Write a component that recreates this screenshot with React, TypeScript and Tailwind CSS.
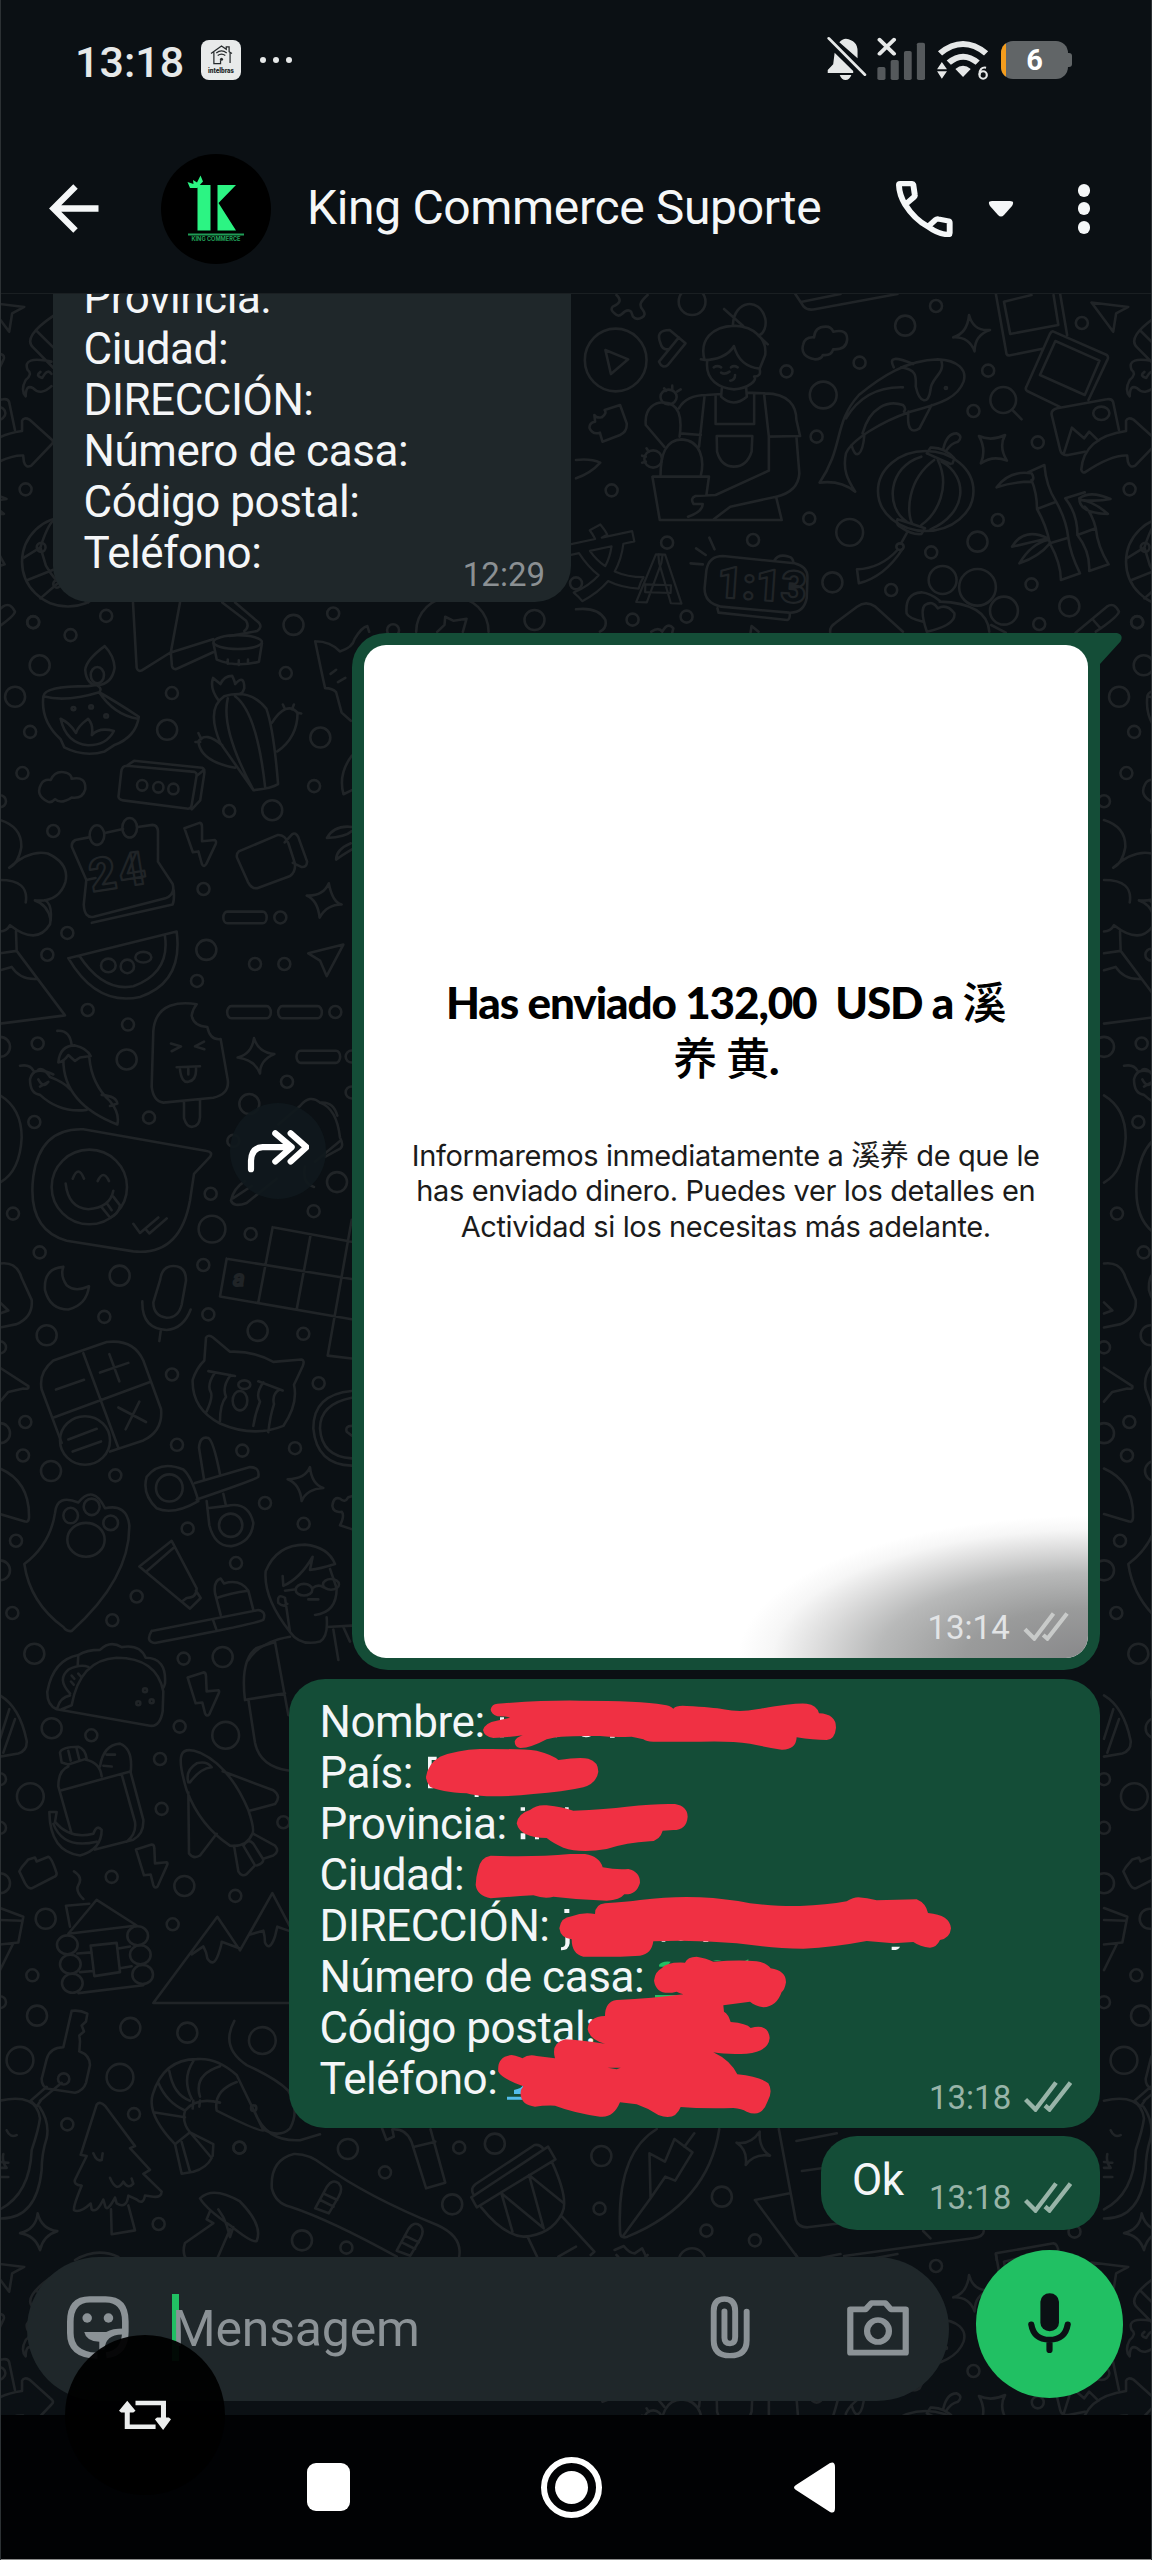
import React from 'react';

type Layer = { t: string; sx: number; sy: number; ox: number; oy: number; d: string; e: number[][]; c: number[][] };

/* Wallpaper doodles. e: ellipses [cx, cy, rx, ry], c: bubbles [cx, cy, size]. */
const layers: Layer[] = [
  {
    t: 'translate(0 280) scale(.36735 .40816)', ox: 0, oy: 280, sx: 0.36735, sy: 0.40816,
    d: 'M-34 55L66 66L33 82L25 127ZM145 88Q60 140 90 165L145 215M100 125L145 165M140 200Q60 185 75 220Q90 230 70 245Q55 270 70 285Q70 255 90 265Q110 285 140 260M110 225Q95 235 115 240Q130 215 140 230M-62 465Q-55 385 60 370L60 345Q65 335 80 342L142 392Q147 398 140 403L85 455Q70 462 65 445L63 430Q20 428 -50 470Q-58 475 -62 465M110 655Q130 600 145 590M65 680L110 655L125 700Q150 740 180 755L240 790M75 735L145 710M110 780L155 745M362 790L372 950Q375 960 385 957L465 912L490 790M465 912L468 945Q470 955 480 953L580 912M467 912L580 880M605 790L670 835Q680 850 665 860M640 790L705 840Q715 850 700 860L625 872M581 890L590 930Q645 950 705 935L713 890M620 930V940M650 932V943M675 930V940M285 897Q235 930 232 955Q235 990 265 993Q305 990 312 950Q310 920 285 897M118 1020Q120 995 240 995L262 992Q280 1000 270 1010Q310 1030 378 1070Q370 1120 310 1140L285 1155Q230 1170 175 1145L165 1125Q110 1080 118 1020Q180 1035 270 1010M270 1010Q310 1065 375 1075M165 1075Q180 1135 240 1140Q290 1140 310 1105Q270 1095 250 1115Q255 1090 240 1075Q210 1095 207 1110Q190 1085 165 1075M690 1250L600 1135Q560 1050 610 1020Q680 1000 725 1050Q745 1100 757 1235Q740 1245 690 1250ZM620 1025Q600 1100 690 1250M640 1020Q700 1060 722 1245M740 1085Q780 1030 810 1060Q810 1120 755 1155M605 1140Q560 1105 540 1130Q545 1180 640 1195M595 1030Q570 1000 580 975L600 990Q610 970 632 970Q640 985 640 990Q665 965 665 1000Q660 1015 650 1015M770 1040L775 1050M800 1040L795 1052M808 1060L820 1062M540 1110L548 1125M532 1132H545M858 885Q875 960 885 1000Q905 1000 915 1010L930 1060L955 1080M858 885Q900 885 925 910Q960 900 965 880Q985 850 1000 848L1005 862M900 965L915 955M920 985L940 975M1133 862A97 85 0 0 1 1330 862M1190 862L1210 845L1212 825L1235 835L1270 830L1260 862M130 1278Q95 1262 112 1235Q120 1222 138 1225Q150 1200 180 1207Q195 1212 195 1222Q235 1215 232 1248Q225 1272 195 1268Q165 1285 150 1272Q140 1282 130 1278ZM345 1190L530 1205Q537 1208 535 1215L522 1285Q520 1297 508 1295L335 1275Q320 1272 323 1262L330 1205Q332 1190 345 1190L365 1178L550 1195Q558 1198 556 1210L545 1275L522 1297M556 1200L535 1215M245 1365L205 1372Q193 1378 196 1390L235 1470L228 1530Q230 1565 255 1560L450 1515Q478 1505 470 1480L430 1425M285 1355L335 1345M375 1340L415 1335Q428 1335 430 1350V1425M235 1470L260 1465M473 1495Q475 1520 470 1530L250 1575M502 1343L543 1330Q550 1330 550 1340V1375L585 1372Q590 1375 587 1382L562 1430Q555 1440 550 1432L540 1400L525 1402ZM650 1400L755 1360Q775 1358 785 1380L803 1430Q805 1450 790 1460L700 1490Q685 1492 675 1475L645 1415Q643 1405 650 1400M775 1378L795 1358Q805 1352 812 1365L836 1425Q835 1440 820 1438L797 1428M958 1165Q920 1210 935 1260L958 1250M890 1367Q910 1335 958 1340M890 1367Q940 1365 958 1350M955 1380Q915 1395 915 1420Q930 1410 958 1395M895 1478Q905 1525 930 1530Q890 1530 870 1562Q865 1520 835 1508Q880 1510 895 1478ZM0 1323Q60 1340 58 1390Q50 1430 25 1440M25 1440Q80 1395 130 1405Q190 1430 178 1475Q160 1525 95 1520Q130 1530 138 1568M0 1470Q80 1470 70 1525',
    e: [[185, 690, 125, 110], [112, 655, 12, 11], [155, 745, 10, 9], [647, 887, 66, 17], [265, 968, 18, 20], [200, 1050, 5, 4], [248, 1046, 5, 4], [289, 1068, 5, 4], [387, 1238, 14, 13], [431, 1243, 14, 13], [472, 1247, 14, 13], [264, 1360, 20, 24], [353, 1342, 20, 24]],
    c: [[90, 838, 0], [192, 870, 0], [289, 823, 0], [907, 817, 0], [778, 963, 0], [468, 1012, 0], [82, 1107, 0], [61, 1208, 0], [855, 1240, 0], [624, 1301, 0], [145, 1350, 0], [554, 1492, 0], [1070, 858, 0], [0, 1277, 0], [108, 944, 1], [799, 845, 1], [41, 1021, 1], [455, 1102, 1], [872, 1121, 1], [741, 1299, 1], [1455, 833, 1]],
  },
  {
    t: 'translate(576 280) scale(.36735 .33333)', ox: 576, oy: 280, sx: 0.36735, sy: 0.33333,
    d: 'M110 45C125 60 120 70 100 80Q92 90 105 100Q115 112 125 102Q140 85 150 95L155 110Q165 122 180 112Q192 105 182 90C170 75 175 65 195 45M80 210L142 238L95 282ZM230 190Q215 150 255 150L298 190L250 255Q235 268 226 245L280 172M230 190Q235 210 250 208M427 135C430 60 500 50 515 115C520 140 510 160 500 165M403 87L455 138M495 165L522 193M340 238L350 240C335 180 370 140 430 137C490 140 520 180 515 225L500 266C465 262 440 240 430 198C415 228 380 240 350 240M357 245C352 300 390 325 430 328C470 325 495 300 485 290M500 268Q505 290 485 290M375 262Q385 255 395 262M422 262Q430 255 440 262M395 278Q405 285 418 275M433 285Q433 300 420 302M397 325L395 350Q428 385 465 350L463 320M280 385Q300 345 355 345L395 342M465 338L515 340C580 340 600 380 600 420L610 468L525 470L512 342M350 347L335 500M380 345L380 432L485 432L485 340M383 468H480L478 515Q465 560 430 560Q395 560 384 515ZM285 460L340 465M600 470L608 580Q605 635 545 650L420 680L375 718M525 470L525 572L380 645L325 648Q310 655 320 672L345 672Q345 695 305 710M545 652L560 720H228L208 590H362L355 645M230 590C230 520 245 480 288 478C340 482 350 540 340 585M240 500L190 435C185 380 220 365 240 368C280 370 290 410 282 470M240 325L245 333M262 317V328M285 328L275 335M192 505L198 515M180 527L190 530M180 548L190 545M50 405Q55 415 70 412Q85 400 78 390L120 375L138 430Q140 455 120 465L72 485L65 458Q45 465 37 445Q35 428 52 425ZM650 238Q610 230 618 195Q622 170 648 172Q650 140 680 140Q695 140 700 155Q740 145 738 180Q735 210 700 208Q695 228 672 225Q668 238 650 238ZM597 42L620 80Q630 92 650 88L875 42M612 66L720 42M1070 105Q1082 155 1127 150Q1085 165 1085 214Q1070 170 1027 172Q1065 160 1070 105ZM1097 468Q1130 485 1168 465Q1150 500 1173 542Q1135 525 1102 550Q1118 510 1097 468ZM663 608C730 500 700 430 770 345C830 290 900 240 985 238C1040 240 1065 270 1055 305C1040 350 1000 370 910 395C830 425 750 480 735 520C725 570 740 600 760 635Q720 600 663 608ZM865 262C850 230 870 230 918 252M905 395C900 450 915 460 935 445L968 375M735 415C770 350 820 320 890 322M780 460C800 380 850 360 890 375Q900 385 893 395M750 495C760 540 780 530 785 465M885 262C930 270 925 290 925 320C935 370 960 375 965 330C965 295 1005 280 995 245M1188 390L1213 418M1143 42L1172 222Q1175 228 1182 226L1270 206M1165 65L1182 162L1313 135L1300 45M1165 65L1240 45M1318 42L1337 165M1320 382L1228 333Q1222 328 1226 320L1290 162Q1295 152 1300 155L1445 225Q1450 230 1447 238L1395 360M1305 183L1425 242L1385 345L1263 285ZM1478 450L1462 365Q1458 355 1445 358L1310 385Q1292 390 1295 405L1318 510Q1322 528 1340 525L1385 515M1328 520L1350 443L1383 475L1397 455L1422 482M955 520L965 503Q1000 500 1030 535L1025 550M955 520L1020 552M1000 505Q1010 460 1035 460Q1055 468 1040 485Q1020 490 1008 512M875 718Q870 735 885 742Q915 765 940 762L950 745M875 718Q910 730 950 745M900 760L885 790M875 810Q830 865 765 868L770 910Q840 890 888 808M975 540C900 600 900 700 915 730M985 540C1020 620 985 700 940 735M940 530C850 560 840 680 900 725M995 545C1070 590 1065 700 965 748M1230 577L1275 555Q1280 620 1307 665L1255 687Q1255 640 1240 600M1255 687Q1280 735 1290 790L1340 773Q1335 720 1307 665M1290 790Q1320 850 1320 900L1372 880Q1345 820 1340 773M1332 655L1385 637M1332 655Q1365 700 1365 765L1415 745Q1405 700 1385 680M1365 765Q1400 815 1397 873L1450 853Q1420 800 1415 745M1145 622Q1180 570 1240 580Q1250 595 1240 605Q1190 605 1145 622M1370 655Q1400 630 1455 657Q1420 665 1375 660Q1410 665 1448 702Q1370 700 1370 655M1187 800Q1220 740 1285 775Q1230 790 1187 800M1285 780Q1240 790 1207 850Q1260 830 1290 790M400 828L595 850Q632 860 630 895L628 955Q620 1000 580 998L395 980Q350 970 350 925L355 870Q362 828 400 828ZM385 985L388 998L575 1020Q583 1018 582 1000M540 842Q550 820 580 830Q590 832 592 848M312 850L345 853M327 805L353 825M363 773L377 808M692 1058Q690 1040 705 1030L765 980Q790 960 815 980L890 1055M900 1000Q895 940 940 937Q965 940 990 962M900 1000Q905 1015 945 1025M955 1055Q935 990 950 975Q970 960 985 985Q1010 970 1030 1000Q1035 1035 955 1055M990 965Q1120 970 1125 1055M1130 1035L1170 1058M0 988Q60 980 80 1020Q85 1045 65 1055M205 1055Q225 1040 235 1055Q250 1025 265 1045L262 1058M475 1058L478 1038L497 1055M1360 1058L1445 980Q1465 965 1478 995Q1475 1010 1415 1055M1408 1020L1428 1045M0 540Q40 535 66 548Q40 580 0 595',
    e: [[108, 240, 84, 94], [252, 351, 22, 22], [210, 537, 24, 26], [1007, 324, 3, 3], [1163, 360, 35, 39], [1430, 400, 22, 20], [952, 633, 130, 120], [882, 800, 10, 10], [998, 900, 38, 42], [1093, 922, 50, 55], [1165, 992, 38, 42]],
    c: [[980, 78, 0], [772, 248, 0], [573, 274, 0], [1122, 272, 0], [1082, 393, 0], [655, 470, 0], [1257, 487, 0], [97, 631, 0], [635, 716, 0], [1148, 720, 0], [482, 780, 0], [248, 788, 0], [967, 817, 0], [858, 930, 0], [1240, 913, 0], [1261, 1032, 0], [154, 1019, 0], [301, 1010, 0], [1377, 129, 0], [1507, 628, 0], [1528, 1027, 0], [896, 137, 1], [1093, 785, 1], [698, 907, 1], [1343, 979, 1], [316, 65, 2], [673, 345, 2], [745, 757, 2], [0, 910, 0]],
  },
  {
    t: 'translate(0 900) scale(.33333 .4847)', ox: 0, oy: 900, sx: 0.33333, sy: 0.4847,
    d: 'M682 24H788A12 12 0 0 1 788 48H682A12 12 0 0 1 682 24ZM694 219H800A12 12 0 0 1 800 244H694A12 12 0 0 1 694 219ZM847 219H953A12 12 0 0 1 953 244H847A12 12 0 0 1 847 219ZM902 311H1008A12 12 0 0 1 1008 336H902A12 12 0 0 1 902 311ZM0 255L195 238L50 105L48 65M0 110L50 105M0 145L35 138Q60 165 110 163M0 65Q20 65 30 52Q110 95 150 50Q160 10 135 0M205 120L530 65Q550 170 420 200Q290 220 205 120ZM238 115Q310 190 400 178Q510 150 495 75M590 215Q545 210 510 218Q465 230 460 270L455 385Q460 415 490 418L640 408Q690 400 683 370L662 287Q630 290 622 262Q580 260 575 238Q578 225 590 215ZM552 418V450Q560 468 575 468Q598 468 600 448V412M513 296L543 302L515 312M612 292L585 302L613 308M530 345L600 343M540 350Q545 378 565 375Q590 372 588 348M565 348V360M925 110L1030 92L980 157L960 125ZM762 285Q775 315 823 318Q780 330 780 358Q765 330 713 325Q755 318 762 285ZM190 330Q190 420 352 463Q360 440 330 415Q275 380 268 325M175 335Q180 300 225 300Q260 305 272 322L240 325L225 332L205 320Q190 335 175 335M215 300Q210 268 172 270M60 342Q90 338 100 352M160 360Q100 340 90 370Q90 400 120 402Q180 440 260 433M115 350Q130 345 150 365Q190 375 210 390M115 370Q130 390 145 375L120 385M305 402Q350 405 352 420L330 425M0 403Q65 430 65 490Q60 560 0 583M250 473Q120 470 100 570Q80 680 200 703L400 725Q540 735 570 620L582 565L630 530Q640 520 620 518ZM197 585Q205 635 265 638Q330 635 340 600M218 575Q235 545 252 575M293 580Q310 555 327 580M303 632L330 655Q355 650 360 630L340 612M320 625L335 640M400 668L420 687L475 655M438 680L448 688L500 657M900 425Q930 400 960 418Q1010 430 1020 490Q1035 510 1015 515L975 530M900 425L835 463M960 418Q1000 415 1012 445M735 580Q700 595 693 620Q700 635 740 625L830 575M700 615L755 590M915 550Q905 585 942 592M945 540L1020 497M190 757Q130 760 135 805Q150 845 205 845Q260 835 267 797Q225 810 200 795Q180 775 190 757M480 785Q485 755 520 755Q558 755 558 785L545 835Q535 862 500 862Q460 858 460 830ZM427 828Q425 885 500 887Q550 885 572 845M482 890L478 910M680 740L1055 782M818 675L1055 705M660 818L1055 865M680 740L660 818M818 675L775 830M932 690L890 845M1055 660L983 940L1055 946M0 750Q50 745 65 780L95 825Q100 860 50 875L0 882M0 830L25 847L0 853M320 912L160 950Q115 975 125 1010L185 1120M330 1138L430 1115Q490 1095 483 1050L430 950Q400 905 320 912M250 935L355 1130M163 1067L448 995M168 1010L252 990M300 975L385 955M328 937L358 993M355 1047L438 1077M418 1035L377 1092M205 1113L290 1091M218 1138L303 1117M613 950L618 903Q625 895 640 903L690 932Q760 930 820 953L905 948Q915 950 908 962L882 1000Q895 1040 850 1085Q760 1110 660 1080Q575 1050 578 990Q590 965 613 950ZM625 972L705 982M645 975Q620 1000 632 1015Q640 1025 620 1055M692 980Q665 1005 678 1025Q660 1040 660 1075M775 993L848 1012M790 995Q765 1020 780 1035Q765 1060 760 1085M838 1010Q815 1020 822 1040Q810 1065 805 1098M1055 1013Q940 1020 940 1090Q950 1165 1055 1167M1055 1027Q960 1040 960 1090Q965 1148 1055 1152M1055 1085Q1035 1085 1040 1097L1055 1105M0 965L85 1003Q88 1010 70 1008L25 1015L0 1035M595 1240Q520 1270 470 1255Q425 1225 440 1190Q480 1155 550 1175Q575 1190 595 1240M585 1203L750 1170Q780 1170 775 1190Q770 1195 590 1237M612 1195L597 1130Q600 1105 625 1110Q640 1115 660 1185M620 1240L628 1290Q645 1335 695 1333Q755 1325 760 1285Q745 1240 680 1250L622 1255M670 1225L678 1250M930 1170Q935 1205 970 1213Q920 1215 905 1240Q900 1205 863 1195Q915 1195 930 1170ZM1055 1230L1045 1232Q1035 1245 1020 1235Q1000 1230 997 1250Q1000 1265 1025 1262Q1035 1270 1020 1290L1055 1298M0 1173Q90 1200 87 1275Q85 1285 75 1282L0 1267M165 1265Q170 1225 235 1243Q280 1205 315 1255Q380 1245 388 1290Q390 1400 215 1508Q200 1510 190 1500Q90 1450 73 1370Q150 1330 165 1265ZM418 1375L515 1322L590 1420Q590 1440 560 1440L545 1448ZM440 1385L520 1337M545 1448L570 1462L602 1440L588 1425M455 1508L775 1465Q800 1468 790 1485Q780 1492 465 1533Q435 1530 455 1508M640 1487L650 1507M662 1475L645 1430Q640 1405 662 1400L672 1410Q720 1400 745 1425L760 1465M650 1440Q690 1430 745 1425M870 1510Q790 1440 797 1385Q830 1330 915 1330Q985 1335 1005 1370Q960 1380 930 1382L938 1355Q900 1400 850 1415L848 1395M855 1440L870 1510Q900 1540 960 1530Q985 1520 980 1480M990 1380L1010 1420Q1010 1470 945 1475M937 1420Q955 1410 970 1418M855 1425L888 1422M855 1440Q830 1430 835 1450Q850 1460 862 1452M925 1443H955M745 1568Q780 1530 870 1520M980 1500L1055 1497M1000 1505L1015 1568M1030 1500L1050 1530',
    e: [[325, 135, 22, 14], [382, 137, 20, 14], [430, 118, 24, 11], [268, 592, 113, 77], [255, 1115, 75, 50], [733, 1000, 18, 9], [720, 1033, 22, 20], [508, 1213, 40, 28], [692, 1290, 35, 24], [212, 1270, 22, 16], [275, 1252, 24, 17], [332, 1285, 22, 15], [258, 1320, 56, 35], [912, 1423, 25, 12], [993, 1412, 24, 11]],
    c: [[202, 68, 0], [142, 113, 0], [841, 36, 0], [765, 132, 0], [853, 132, 0], [591, 167, 0], [263, 227, 0], [384, 257, 0], [1006, 231, 0], [113, 296, 0], [861, 375, 0], [103, 458, 0], [447, 449, 0], [39, 647, 0], [632, 606, 0], [700, 497, 0], [941, 642, 0], [752, 689, 0], [119, 727, 0], [610, 753, 0], [625, 855, 0], [313, 860, 0], [910, 895, 0], [516, 979, 0], [956, 997, 0], [76, 1077, 0], [531, 1124, 0], [727, 1136, 0], [885, 1131, 0], [69, 1146, 0], [346, 1187, 0], [795, 1244, 0], [911, 1287, 0], [563, 1297, 0], [48, 1322, 0], [708, 1368, 0], [410, 1437, 0], [37, 1471, 0], [337, 1486, 0], [0, 923, 0], [1055, 323, 0], [1055, 397, 0], [619, 103, 1], [380, 329, 1], [748, 421, 1], [1011, 582, 1], [359, 775, 1], [140, 898, 1], [773, 889, 1], [153, 1178, 1], [103, 1555, 1], [0, 303, 1], [0, 1100, 1], [0, 1383, 1], [636, 679, 2]],
  },
  {
    t: 'translate(0 1640) scale(.33333 .39541)', ox: 0, oy: 1640, sx: 0.33333, sy: 0.39541,
    d: 'M215 165Q240 50 350 45Q470 45 490 130L488 180Q480 220 450 217L170 175Q140 165 142 130Q160 50 235 38Q260 25 300 25Q330 0 365 18Q420 10 437 45Q500 45 495 110Q490 125 487 120M235 38L233 65M215 165L185 175M172 172Q180 145 210 140M210 135Q170 100 205 75Q240 60 265 68M215 90l8 8M235 85l8 8M213 105l8 8M563 95L610 82Q618 82 618 92L620 130L655 127Q660 128 655 137L628 188Q620 195 615 185L607 158L587 160ZM408 530L455 517Q463 517 463 527L465 565L500 562Q505 563 500 572L473 623Q465 630 460 620L452 593L432 595ZM0 140Q60 170 80 255Q82 280 55 287L0 295M0 250L28 175M10 285L45 200M215 490L175 370Q175 330 205 320L205 315L185 310L180 285Q185 270 235 270Q255 275 260 300L205 315M205 280L212 305M230 275L238 303M258 303Q300 310 305 345M185 380L388 333M300 320Q310 265 360 262Q400 275 392 335L430 455Q432 490 400 505L285 530M365 340L405 460Q410 490 380 510M320 290L345 290M310 318L335 320M148 435L170 435L165 460Q210 505 280 490Q290 465 305 480Q305 530 240 545Q150 535 148 435M160 465Q190 530 290 510M65 575L85 555L105 550L110 560L145 548Q155 550 170 590Q170 598 160 600L95 628Q85 630 75 615L58 585ZM222 585Q250 600 235 620Q225 635 250 655M545 290Q555 270 600 285Q690 320 745 430Q765 480 757 490Q740 525 690 520Q600 470 560 380Q535 310 545 290M565 360Q555 330 590 312Q620 305 635 322Q600 325 570 360M668 332L820 380Q845 395 825 415L748 432M565 385L567 540Q580 555 600 545L650 490M702 520L715 585Q725 600 740 592L765 570L730 520Q745 500 760 515L790 555Q790 565 770 570M760 490L825 520Q840 535 820 545L790 553M0 678L70 700L55 765L0 770M0 708L65 710M38 770L0 835M205 743L290 657L410 722L205 743M210 725L198 672L268 667M232 793L275 790M355 780L390 775M240 840L280 837M360 830L395 825M235 893L430 873M272 773L350 766L360 840L283 850ZM460 918L652 700L720 785L817 640L870 725M460 918H880M575 795L610 775Q620 790 622 805Q640 830 655 795Q665 770 665 763L720 780M750 745L790 735Q795 750 795 765Q808 790 825 750L832 725L865 735M215 938Q240 935 262 945L258 965L245 975L252 990L238 1000L240 1015L238 1040M215 938L190 1030Q150 1030 140 1060L125 1110Q125 1130 145 1135L225 1145Q250 1140 258 1120L270 1075Q270 1050 238 1040M185 1120L120 1165M140 1130L92 1165L110 1180L122 1165M0 1165Q110 1145 120 1210Q115 1240 95 1290Q90 1400 0 1440M118 1180Q150 1220 140 1260Q125 1300 125 1340Q110 1465 0 1463M20 1240Q30 1260 50 1252M0 1320L25 1322M10 1300Q5 1320 20 1335L0 1335M0 1358H25M525 1275Q440 1200 458 1150Q490 1060 590 1060Q650 1055 710 1100L790 1240Q780 1245 650 1190Q640 1140 710 1118M660 1170Q590 1155 555 1190Q545 1220 570 1245L635 1310Q620 1335 580 1345L545 1350L525 1275L570 1245L640 1275L638 1305M545 1270L570 1345M465 1195L555 1207M475 1120Q500 1170 555 1190M508 1090Q520 1150 570 1165M580 1065Q545 1110 575 1160M660 1078Q580 1100 600 1155M580 1165L578 1185M600 1165L598 1180M765 1195Q800 1270 900 1265L960 1250M703 963Q660 1030 740 1075Q830 1110 865 1140Q900 1190 870 1235Q840 1260 790 1238M290 1175Q300 1165 315 1178L405 1280L390 1285L450 1340L430 1350L485 1395Q485 1410 460 1408L435 1405Q430 1430 410 1415L385 1405Q380 1440 350 1425L345 1410Q320 1450 315 1430L310 1415Q290 1450 275 1440L272 1425Q240 1450 222 1442Q220 1430 245 1380Q220 1378 225 1365L260 1305L242 1302ZM333 1440L335 1503L405 1493L385 1430M280 1298Q290 1320 305 1315L308 1298M330 1360Q350 1400 370 1370Q385 1390 400 1375L395 1362M113 1450Q125 1490 172 1495Q130 1505 120 1543Q105 1505 60 1500Q108 1490 113 1450ZM600 1412Q640 1380 720 1420Q790 1480 770 1520Q755 1525 690 1480Q620 1440 600 1412ZM630 1445L620 1465L640 1475L555 1525Q545 1550 560 1568M690 1490L650 1568M655 1440L670 1460L680 1480L690 1510L700 1485M225 1568Q290 1535 355 1560M865 330Q780 320 765 260L745 150L735 152Q720 50 770 20L825 5L865 190M745 150L855 135',
    e: [[435, 127, 6, 5], [415, 160, 6, 5], [455, 155, 6, 5], [202, 771, 31, 24], [211, 820, 31, 24], [217, 868, 31, 24], [413, 748, 31, 24], [421, 796, 31, 24], [428, 846, 31, 24], [191, 1110, 17, 14], [761, 1184, 8, 7]],
    c: [[551, 47, 0], [274, 241, 0], [539, 219, 0], [480, 301, 0], [485, 427, 0], [335, 599, 0], [518, 719, 0], [706, 647, 0], [850, 461, 0], [97, 848, 0], [402, 1199, 0], [718, 1284, 0], [202, 1225, 0], [476, 1477, 0], [0, 352, 0], [0, 475, 0], [0, 916, 0], [668, 43, 1], [155, 223, 1], [553, 622, 1], [137, 705, 1], [391, 981, 1], [562, 993, 1], [111, 950, 1], [0, 615, 1], [677, 241, 2], [91, 396, 2], [60, 1063, 2], [360, 1106, 2], [787, 1013, 2]],
  },
  {
    t: 'translate(0 2120) scale(.36735 .33333)', ox: 0, oy: 2120, sx: 0.36735, sy: 0.33333,
    d: 'M740 205Q735 120 800 102Q840 100 880 135Q1000 230 1190 315Q1260 350 1250 410M740 205Q750 250 790 260Q900 300 1080 410M858 265L890 200Q905 175 922 190Q935 205 922 230L895 280ZM880 220L918 240M872 240L908 260M1080 392L1112 327Q1127 302 1144 317Q1157 332 1144 357L1117 407ZM1102 347L1140 367M1094 367L1130 387M1040 25L1052 60L1072 50L1068 28Q1105 25 1120 65L1160 205L1212 188L1172 28M1128 80L1185 65M1283 232L1298 262L1512 118L1492 80L1283 232M1288 222Q1280 205 1295 192L1455 75Q1470 72 1480 88M1310 262Q1370 345 1425 350Q1500 345 1530 280Q1550 240 1502 125M1365 220L1395 335M1365 220L1480 325L1440 165L1535 250M1437 352L1462 410M1530 290L1568 335M1520 410L1568 380',
    e: [],
    c: [[652, 83, 0], [1048, 157, 0], [1250, 83, 0], [943, 383, 0], [947, 87, 1], [1347, 71, 1], [1231, 253, 1], [822, 361, 1]],
  },
  {
    t: 'translate(576 2120) scale(.36735 .33333)', ox: 576, oy: 2120, sx: 0.36735, sy: 0.33333,
    d: 'M120 335Q110 100 220 27M390 27Q360 250 140 350Q120 358 120 335M203 235L200 100L242 125L268 57L317 97L270 182L243 170L203 235L130 345M295 80L322 40M500 35Q497 85 528 107Q485 100 462 135Q468 90 437 68Q475 75 500 35ZM552 27L598 300Q605 322 630 322L720 310M600 63L710 40M615 153L668 145M487 240L582 220M487 240L600 408M730 408L1080 355Q1110 350 1110 333M945 333L965 355M0 335L50 395L40 405M105 390L130 378Q145 400 160 400L180 385L190 408M1145 420L1143 400L1300 370Q1312 370 1315 405',
    e: [],
    c: [[64, 266, 0], [355, 332, 0], [487, 361, 0], [1357, 335, 0], [69, 108, 1], [397, 230, 1]],
  },
];

const radii = [6, 10, 13.4];

function Wallpaper() {
  return (
    <svg aria-hidden="true" className="absolute inset-0 h-[2560px] w-[1152px]" viewBox="0 0 1152 2560" fill="none" stroke="#202427" strokeWidth="2.6" strokeLinecap="round" strokeLinejoin="round">
      <g id="doodles">
        {layers.map((l, i) => (
          <g key={i}>
            <g transform={l.t}>
              <path d={l.d} vectorEffect="non-scaling-stroke" />
              {l.e.map((e, j) => (
                <ellipse key={j} cx={e[0]} cy={e[1]} rx={e[2]} ry={e[3]} vectorEffect="non-scaling-stroke" />
              ))}
            </g>
            {l.c.map((c, j) => (
              <circle key={j} cx={l.ox + c[0] * l.sx} cy={l.oy + c[1] * l.sy} r={radii[c[2]]} />
            ))}
          </g>
        ))}
        <g strokeWidth="2.2" fontFamily="Roboto, sans-serif" fontWeight="900">
          <text x="92" y="892" fontSize="46" transform="rotate(-9 92 892)" letterSpacing="3">24</text>
          <text x="716" y="597" fontSize="44" transform="rotate(4 716 597)">1:13</text>
          <text x="636" y="602" fontSize="68" transform="rotate(2 636 602)" fontWeight="700">A</text>
          <text x="573" y="596" fontSize="74" fontFamily="'Noto Sans CJK SC', sans-serif" transform="rotate(-12 573 596)">文</text>
          <text x="233" y="1286" fontSize="22" fontStyle="italic" fontWeight="400">a</text>
        </g>
      </g>
      <use href="#doodles" x="1104" />
      <use href="#doodles" x="-1104" />
      <use href="#doodles" y="1960" />
      <use href="#doodles" x="1104" y="1960" />
      <use href="#doodles" x="-1104" y="1960" />
    </svg>
  );
}

function Ticks({ className }: { className: string }) {
  return (
    <svg className={className} viewBox="0 0 48 31" fill="none" stroke="currentColor" strokeWidth="4.4">
      <path d="M1.5 18.5L11.5 28.5L32 1.5M21 24.5L25.500 28.500L46.500 1.500" />
    </svg>
  );
}

function StatusBar() {
  return (
    <div className="flex h-[120px] items-center pr-[80px] pl-[75px] text-[#e6e8e8]">
      <span className="mt-[3px] w-[126px] text-[43px] leading-[50px] font-medium">13:18</span>
      <div className="flex h-[40px] w-[40px] flex-col items-center rounded-[8px] bg-[#e8eaea] pt-[5px]">
        <svg className="h-[20px] w-[23px]" viewBox="0 0 24 21" fill="none" stroke="#25292b" strokeWidth="1.3">
          <path d="M1 9L12 1L17 4.500V2H20V7L23 9M4 7.500V19.500H11V16M21 8V19M8 11Q12 8 16 11M6.500 8.500Q12 4 17.500 8.500" />
          <circle cx="12" cy="15" r="1.6" fill="#25292b" stroke="none" />
        </svg>
        <span className="mt-[3px] text-[6.500px] leading-[7px] font-black text-[#25292b]">intelbras</span>
      </div>
      <div className="ml-[19px] flex gap-[7px]">
        <i className="h-[6px] w-[6px] rounded-full bg-current" />
        <i className="h-[6px] w-[6px] rounded-full bg-current" />
        <i className="h-[6px] w-[6px] rounded-full bg-current" />
      </div>
      <div className="ml-auto flex items-center">
        <svg className="mb-[4px] h-[45px] w-[40px]" viewBox="680 105 110 135" preserveAspectRatio="none" fill="currentColor">
          <path d="M714 124Q722 113 732 113Q764 118 764 150V172ZM701 155L752 210V216H682V207L697 190ZM715 222H747Q742 237 731 237Q720 237 715 222Z" />
          <path d="M685 112L784 221" stroke="currentColor" strokeWidth="8" strokeLinecap="round" />
        </svg>
        <svg className="mb-[4px] ml-[10px] h-[43px] w-[48px]" viewBox="818 105 130 129" preserveAspectRatio="none">
          <path d="M825 113L864 155M864 113L825 155" stroke="currentColor" strokeWidth="11" strokeLinecap="round" />
          <g fill="#55595c">
            <rect x="819" y="195" width="22" height="39" rx="5" />
            <rect x="855" y="174" width="22" height="60" rx="5" />
            <rect x="891" y="147" width="21" height="87" rx="5" />
            <rect x="926" y="122" width="22" height="112" rx="5" />
          </g>
        </svg>
        <svg className="ml-[11px] h-[40px] w-[53px]" viewBox="978 120 145 120" preserveAspectRatio="none" fill="none" stroke="currentColor">
          <path d="M989 160Q1052 104 1115 160M1013 188Q1052 152 1092 188" strokeWidth="17" />
          <path d="M1031 207Q1052 188 1073 207L1052 231ZM981 208L994 186L1008 208ZM981 214L994 236L1008 214Z" fill="currentColor" stroke="none" />
          <path d="M1115 203Q1097 200 1097 224" strokeWidth="6" />
          <ellipse cx="1107" cy="225" rx="10" ry="11" strokeWidth="6" />
        </svg>
        <div className="relative ml-[12px] flex h-[38px] w-[67px] items-center justify-center overflow-hidden rounded-[12px] bg-[#616567]">
          <i className="absolute left-0 h-[38px] w-[5px] bg-[#f59d1d]" />
          <span className="text-[29px] leading-[38px] font-bold text-white">6</span>
        </div>
        <i className="h-[14px] w-[4px] rounded-r-[3px] bg-[#616567]" />
      </div>
    </div>
  );
}

function ChatHeader() {
  return (
    <div className="flex h-[173px] items-center pt-[4px] pl-[49px] text-[#f5f7f8]">
      <svg className="h-[49px] w-[50px]" viewBox="0 0 50 49" fill="none" stroke="currentColor" strokeWidth="6.300">
        <path d="M49.500 24.500H4M26.500 2.500L4.500 24.500L26.500 46.500" />
      </svg>
      <div className="ml-[62px] h-[110px] w-[110px] rounded-full bg-black">
        <svg className="h-[110px] w-[110px]" viewBox="0 0 110 110" fill="#2cf483">
          <path d="M36.500 31H49.500V76.500H36.500ZM56.500 31H75L57.500 49L75 76.500H56.500ZM26.500 28L32.500 30L32 26L36 28.500L39.500 21.500L42 27.500L36 34H29Z" />
          <path d="M27 80.500H83" stroke="#1f9c56" strokeWidth="2.200" />
          <text x="55" y="86.500" fontSize="5.600" fontWeight="700" fontFamily="Inter, sans-serif" textAnchor="middle" textLength="49" lengthAdjust="spacingAndGlyphs" fill="#22a55c">KING COMMERCE</text>
        </svg>
      </div>
      <h1 className="mt-[-2px] ml-[36px] w-[550px] text-[48px] leading-[56px] tracking-[-0.350px] whitespace-nowrap">King Commerce Suporte</h1>
      <svg className="ml-[39px] h-[56px] w-[57px]" viewBox="870 541 155 168" preserveAspectRatio="none" fill="none" stroke="currentColor" strokeWidth="16" strokeLinejoin="round">
        <path d="M881 549H914Q916 549 917 552L921 582Q922 586 919 589L895 612Q879 583 878 553Q878 549 881 549ZM957 678L978 657Q981 654 985 655L1013 661Q1016 662 1016 666V697Q1016 702 1011 702Q984 700 957 678ZM895 612Q920 656 957 678" />
      </svg>
      <svg className="ml-[35px] h-[17px] w-[26px]" viewBox="0 0 26 17" fill="currentColor">
        <path d="M4 1H22Q27 1 24 6L16 15Q13 18 10 15L2 6Q-1 1 4 1Z" />
      </svg>
      <div className="ml-[64px] flex flex-col gap-[5.500px]">
        <i className="h-[13px] w-[12px] rounded-full bg-current" />
        <i className="h-[13px] w-[12px] rounded-full bg-current" />
        <i className="h-[13px] w-[12px] rounded-full bg-current" />
      </div>
    </div>
  );
}

const outgoing = ['Nombre:', 'País:', 'Provincia:', 'Ciudad:', 'DIRECCIÓN:', 'Número de casa:', 'Código postal:', 'Teléfono:'];

function Scribbles() {
  return (
    <svg aria-hidden="true" className="absolute top-[-9px] left-[-8.500px] h-[460px] w-[700px]" viewBox="0 0 2100 1380" fill="#f03043">
      <g fill="#f4f6f8">
        <path d="M444 260H470V270H455V340L460 355H444ZM584 370H596V381H584ZM722 412H735V422H722ZM722 490H736V508H722ZM765 500H777V508H765ZM855 412H866V422H855ZM594 600H604V620H594ZM853 717H868V729H853ZM856 800H869V820Q866 842 843 841V832Q856 832 856 820ZM660 142H672V150H660ZM660 185H672V202H660ZM810 195Q830 208 845 195ZM900 195Q915 208 935 197ZM990 195H1004V203H990ZM1145 805H1156V815H1145ZM1188 805Q1200 820 1216 808ZM1270 808H1285V816H1270ZM1835 830H1860Q1855 842 1835 840Z" />
      </g>
      <path d="M1137 885Q1145 872 1172 875L1160 890H1138ZM1125 975H1210V983H1125ZM1298 873Q1310 868 1325 873ZM1395 873H1405V868Z" fill="#21c063" />
      <path d="M681 1280H730V1289H681ZM702 1260Q725 1255 730 1245V1272H702Z" fill="#53bdeb" />
      <path d="M652 101Q800 90 900 92Q1080 92 1150 104Q1170 106 1180 116Q1190 105 1220 108Q1300 112 1330 118Q1380 128 1430 118Q1540 98 1580 101Q1610 104 1617 130Q1668 132 1668 173Q1665 208 1640 210Q1600 210 1550 202Q1548 240 1505 239Q1440 228 1410 221Q1350 212 1260 215H1125Q1100 216 1090 208L1055 200Q1000 203 960 198Q830 196 800 208Q750 235 720 234Q704 232 704 214Q708 202 728 196Q680 202 640 204Q612 200 609 180Q615 158 650 152L690 143Q680 139 652 139Q632 132 632 118Q636 102 652 101Z" />
      <path d="M438 320Q445 280 480 260Q530 240 600 237Q720 236 770 242Q820 255 835 270Q900 260 925 266Q955 275 955 305Q950 340 910 352Q850 366 760 372Q690 380 620 379Q580 376 560 370Q480 365 450 350Q438 335 438 320Z" />
      <path d="M710 460Q715 430 750 420Q770 403 800 406Q850 412 880 422Q980 418 1040 410Q1130 400 1185 402Q1222 408 1223 440Q1220 480 1180 480L1148 482Q1140 512 1110 514Q1040 518 980 537Q900 550 850 533Q820 520 800 504Q720 504 710 460Z" />
      <path d="M594 600Q600 562 632 557Q760 562 870 552H915Q960 560 968 592Q1010 600 1045 597Q1080 605 1080 638Q1070 675 1033 673Q1020 690 980 692Q900 690 820 680Q795 688 760 676Q690 680 632 685Q592 678 587 645Q588 620 594 600Z" />
      <path d="M838 775Q842 742 875 739Q910 725 945 732Q945 703 975 700Q1040 696 1080 690Q1180 678 1260 682Q1340 686 1410 700Q1500 710 1560 708Q1640 705 1700 694Q1720 682 1735 682Q1760 684 1790 691L1910 688Q1938 700 1944 729Q2010 735 2013 775Q2010 805 1980 810Q1970 832 1950 833Q1920 830 1900 816L1840 820L1760 813Q1660 832 1570 836Q1500 836 1440 828L1370 820Q1240 808 1120 814Q1115 852 1080 857Q1000 862 910 860Q875 852 875 808Q842 805 838 775Z" />
      <path d="M1122 932Q1125 905 1145 895Q1160 875 1215 878Q1222 860 1250 860Q1280 865 1300 875Q1380 868 1430 874Q1460 878 1472 895Q1518 902 1518 937Q1514 960 1505 966Q1490 1010 1450 1012Q1425 1008 1410 995L1330 1006L1332 1025Q1345 1032 1352 1056Q1400 1060 1412 1074Q1465 1060 1469 1104Q1465 1145 1400 1151Q1340 1154 1300 1147Q1350 1170 1372 1213Q1440 1220 1465 1240Q1480 1265 1462 1296Q1445 1345 1400 1325Q1385 1316 1360 1314Q1260 1316 1202 1311Q1185 1355 1135 1335Q1105 1315 1070 1303L1020 1297Q1000 1345 960 1340Q880 1328 825 1307Q790 1306 765 1310Q725 1305 722 1275Q720 1260 730 1249Q665 1225 655 1205Q650 1160 695 1155Q720 1160 727 1165Q745 1152 770 1158L825 1165Q812 1120 855 1108Q900 1110 975 1121Q930 1110 923 1078Q925 1040 975 1038Q975 995 1010 990Q1120 985 1210 973Q1200 970 1190 965Q1130 980 1122 932Z" />
      <path d="M983 1193L1022 1193L1010 1198Z" fill="#144d37" />
    </svg>
  );
}

function InputBar() {
  return (
    <div className="flex items-start pt-[20px] pl-[27px]">
      <div className="mt-[6.500px] flex h-[144.500px] w-[922px] items-center rounded-full bg-[#1f272a] pt-[2px] pl-[40px] text-[#8b9296]">
        <svg className="mt-[-4px] h-[63px] w-[62px]" viewBox="183 531 169 186" preserveAspectRatio="none">
          <path d="M266 707H262Q192 704 192 640V608Q192 541 245 541H288Q342 541 342 606V636Q342 700 290 706" fill="none" stroke="currentColor" strokeWidth="18" />
          <path d="M230 637H290Q308 626 342 627V645Q288 640 285 690H271V666Q235 664 230 637Z" fill="currentColor" />
          <ellipse cx="238" cy="596" rx="13" ry="14" fill="currentColor" />
          <ellipse cx="296" cy="596" rx="13" ry="14" fill="currentColor" />
        </svg>
        <i className="mt-[-4px] ml-[43px] h-[67px] w-[7px] bg-[#21c063]" />
        <span className="relative mt-[-1px] ml-[-7px] w-[260px] text-[50px] leading-[60px] tracking-[-0.200px] whitespace-nowrap">Mensagem</span>
        <svg className="mt-[-4px] ml-[278px] h-[63px] w-[40px]" viewBox="363 531 108 187" preserveAspectRatio="none" fill="none" stroke="currentColor" strokeWidth="16" strokeLinecap="round">
          <path d="M462 577V662Q462 708 417 708Q373 708 373 662V576Q373 540 402 540Q431 540 431 576V652Q431 672 417 672Q402 672 402 655V576" />
        </svg>
        <svg className="mt-[-4px] ml-[97px] h-[56px] w-[62px]" viewBox="735 541 170 168" preserveAspectRatio="none" fill="none" stroke="currentColor" strokeWidth="17" strokeLinejoin="round">
          <path d="M744 569H786L802 550H840L855 569H896V699H744Z" />
          <ellipse cx="820" cy="634" rx="30" ry="33" />
        </svg>
      </div>
      <div className="ml-[26.500px] flex h-[148px] w-[147px] items-center justify-center rounded-full bg-[#21c063]">
        <svg className="mt-[-3px] h-[60px] w-[43px]" viewBox="1228 518 118 180" preserveAspectRatio="none" fill="none" stroke="#0b1014" strokeWidth="17" strokeLinecap="round">
          <rect x="1262" y="519" width="51" height="114" rx="25.500" fill="#0b1014" stroke="none" />
          <path d="M1237 612Q1244 658 1287 658Q1330 658 1337 612M1287 662V690" />
        </svg>
      </div>
    </div>
  );
}

export default function App() {
  return (
    <div className="relative flex h-[2560px] w-[1152px] flex-col overflow-hidden bg-[#0b1014] font-[Roboto,sans-serif] text-[#f4f6f8]">
      <Wallpaper />
      <header className="relative h-[294px] border-b border-[#1a1f22] bg-[#0b1014]">
        <StatusBar />
        <ChatHeader />
      </header>
      <main className="relative flex h-[2121px] flex-col overflow-hidden">
        <section className="mt-[-22px] ml-[53px] flex h-[330px] w-[518px] shrink-0 rounded-b-[36px] bg-[#1f272a] pr-[26px] pl-[30.500px]">
          <div className="pt-[1px] text-[44px] leading-[51px] tracking-[-0.450px] whitespace-nowrap">
            <p>Provincia:</p>
            <p>Ciudad:</p>
            <p>DIRECCIÓN:</p>
            <p>Número de casa:</p>
            <p>Código postal:</p>
            <p>Teléfono:</p>
          </div>
          <span className="mb-[9px] ml-auto self-end text-[33px] leading-[36px] text-[#8b9093]">12:29</span>
        </section>

        <div className="mt-[31px] flex h-[1037px] shrink-0 justify-end">
          <div className="mt-[470px] mr-[26px] flex h-[96px] w-[96px] items-center justify-center rounded-full bg-[#0f181d]/90">
            <svg className="h-[44px] w-[62px]" viewBox="738 474 186 92" preserveAspectRatio="none" fill="none" stroke="#fff" strokeWidth="6.200" strokeLinecap="round" strokeLinejoin="round">
              <path d="M750 558V540Q752 513 785 512H868M823 483L872 512L823 542M869 483L916 512L869 542" vectorEffect="non-scaling-stroke" />
            </svg>
          </div>
          <section className="h-[1037px] w-[748px] shrink-0 rounded-tl-[34px] rounded-b-[36px] bg-[#144d37] pt-[12px] pl-[11.500px]">
            <div className="relative h-[1013px] w-[724.500px] overflow-hidden rounded-[22px] bg-white text-center text-black">
              <div className="pt-[329px] text-[44px] leading-[56px] font-black tracking-[-1.100px] whitespace-nowrap font-[Lato,'Noto_Sans_CJK_SC',sans-serif]">
                <p>Has enviado 132,00&nbsp; USD a <b className="font-medium">溪</b></p>
                <p><b className="font-medium">养 黄</b>.</p>
              </div>
              <div className="mt-[52px] text-[29px] leading-[35.300px] tracking-[-0.370px] whitespace-nowrap text-[#1b1b1b] font-[Inter,'Noto_Sans_CJK_SC',sans-serif]">
                <p>Informaremos inmediatamente a 溪养 de que le</p>
                <p>has enviado dinero. Puedes ver los detalles en</p>
                <p>Actividad si los necesitas más adelante.</p>
              </div>
              <div className="absolute right-0 bottom-0 h-[142px] w-[350px] bg-[radial-gradient(ellipse_100%_100%_at_100%_100%,#88888a_0%,#9a9b9b_35%,#b8b9b9_60%,#dedede_78%,#f6f6f6_90%,#fff_100%)]" />
              <div className="absolute right-[19.500px] bottom-[11px] flex items-center text-[#e2e4e6]">
                <span className="w-[95px] text-left text-[33px] leading-[38px]">13:14</span>
                <Ticks className="mb-[3px] h-[29px] w-[46px] text-[#c8cac9]" />
              </div>
            </div>
          </section>
          <svg className="mr-[30.500px] h-[34px] w-[21.500px] shrink-0" viewBox="0 0 21.500 34" fill="#144d37">
            <path d="M-1 0H17Q24 2 20.500 8.500L0 31V34H-1Z" />
          </svg>
        </div>

        <section className="relative mt-[9px] mr-[52px] h-[448.500px] w-[811.500px] shrink-0 self-end rounded-[36px] bg-[#144d37] pt-[17.500px] pl-[31px]">
          <div className="text-[44px] leading-[51px] tracking-[-0.450px] whitespace-nowrap">
            {outgoing.map((line) => (
              <p key={line}>{line}</p>
            ))}
          </div>
          <Scribbles />
          <div className="absolute right-[28px] bottom-[10.500px] flex items-center text-[#98b4a8]">
            <span className="w-[95px] text-[33px] leading-[38px]">13:18</span>
            <Ticks className="mb-[3px] h-[31px] w-[48px]" />
          </div>
        </section>

        <section className="mt-[8.500px] mr-[52px] flex h-[94px] w-[279px] shrink-0 self-end rounded-[36px] bg-[#144d37] pr-[28px] pl-[31px]">
          <span className="mt-[17.500px] text-[44px] leading-[52px] tracking-[-0.450px]">Ok</span>
          <div className="mt-[43px] ml-auto flex h-[38px] items-center text-[#98b4a8]">
            <span className="w-[95px] text-[33px] leading-[38px]">13:18</span>
            <Ticks className="mb-[1px] h-[31px] w-[48px]" />
          </div>
        </section>

        <InputBar />
      </main>

      <nav className="relative flex h-[144px] items-center bg-[#010204] pl-[307px]">
        <i className="h-[48px] w-[43px] rounded-[9px] bg-white" />
        <div className="ml-[191px] flex h-[61px] w-[61px] items-center justify-center rounded-full border-[6px] border-white">
          <i className="h-[33px] w-[33px] rounded-full bg-white" />
        </div>
        <svg className="ml-[192px] h-[51px] w-[41px]" viewBox="0 0 41 51" fill="#fff">
          <path d="M2 23L36 1Q41 -1 41 5V46Q41 52 36 50L2 28Q-2 25.500 2 23Z" />
        </svg>
      </nav>
      <div className="relative h-px w-full bg-[#8a8a8a]" />

      <div className="absolute top-[2335px] left-[65px] flex h-[160px] w-[160px] items-center justify-center rounded-full bg-black/95">
        <svg className="h-[30px] w-[52px]" viewBox="322 838 145 92" preserveAspectRatio="none" fill="none" stroke="#eceeee" strokeWidth="14">
          <path d="M368 847H446V905M345 865V920H424" />
          <path d="M322 871L345 840L368 871L362 876H328ZM422 897L445 930L467 897L461 892H428Z" fill="#eceeee" stroke="none" />
        </svg>
      </div>
      <i className="absolute top-0 left-0 h-[2560px] w-px bg-[#2c3134]" />
      <i className="absolute top-0 right-0 h-[2560px] w-px bg-[#2c3134]" />
    </div>
  );
}
